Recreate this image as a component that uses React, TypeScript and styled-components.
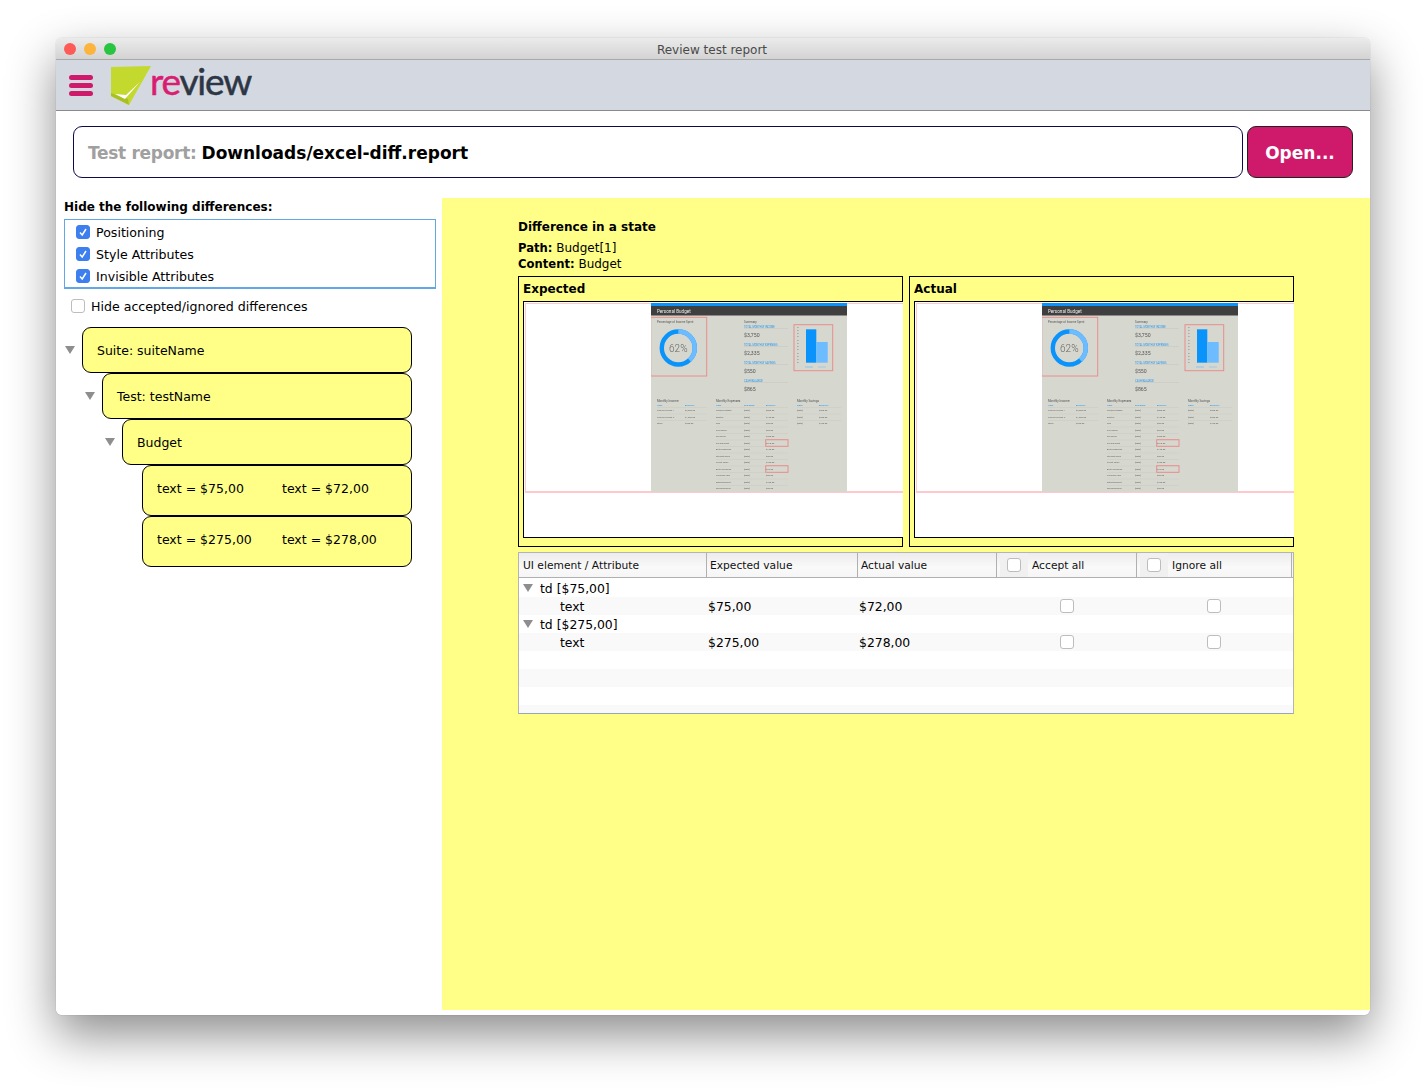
import React from "react";
import styled, { createGlobalStyle } from "styled-components";

const UI_FONT = `"DejaVu Sans", "Noto Sans", sans-serif`;

const GlobalStyle = createGlobalStyle`
  html, body {
    margin: 0;
    padding: 0;
    background: #fff;
    font-family: ${UI_FONT};
    color: #000;
  }
`;

const Page = styled.div`
  box-sizing: border-box;
  width: 1426px;
  height: 1089px;
  padding: 38px 56px 0;
  overflow: hidden;
`;

const Window = styled.div`
  height: 977px;
  display: flex;
  flex-direction: column;
  background: #fff;
  border-radius: 6px;
  overflow: hidden;
`;

const WindowShadow = styled.div`
  border-radius: 6px;
  box-shadow: 0 20px 48px rgba(0, 0, 0, 0.45), 0 0 1px rgba(0, 0, 0, 0.4);
`;

const TitleBar = styled.div`
  position: relative;
  flex: none;
  height: 21px;
  line-height: 24px;
  padding-right: 2px;
  text-align: center;
  font-size: 12px;
  color: #4a4a4a;
  background: linear-gradient(#ebebeb, #d3d3d3);
  border-bottom: 1px solid #a9a9a9;
`;

const Lights = styled.div`
  position: absolute;
  left: 8px;
  top: 5px;
  display: flex;
  gap: 8px;
`;

const Light = styled.span<{ $color: string }>`
  width: 12px;
  height: 12px;
  border-radius: 50%;
  background: ${(p) => p.$color};
`;

const Toolbar = styled.div`
  flex: none;
  height: 50px;
  display: flex;
  align-items: center;
  padding-left: 13px;
  gap: 18px;
  background: #d4d9e1;
  border-bottom: 1px solid #8a8a8a;
`;

const Burger = styled.div`
  display: flex;
  flex-direction: column;
  gap: 3px;
  width: 24px;
  margin-top: 1px;
`;

const BurgerBar = styled.span`
  height: 5px;
  border-radius: 3px;
  background: #cf1a6c;
`;

const Logo = styled.div`
  display: flex;
  align-items: center;
`;

const LogoMark = styled.svg`
  width: 40px;
  height: 40px;
  margin-top: 1px;
`;

const LogoWord = styled.span`
  margin-left: -1px;
  margin-top: -8px;
  font-family: Lato, sans-serif;
  font-size: 37px;
  line-height: 40px;
  letter-spacing: -1.2px;
  color: #2d3645;
  -webkit-text-stroke: 0.5px currentColor;
`;

const LogoAccent = styled.span`
  color: #d81e72;
`;

const ReportBar = styled.div`
  flex: none;
  display: flex;
  gap: 4px;
  padding: 15px 17px 20px;
`;

const ReportField = styled.div`
  flex: 1;
  height: 52px;
  box-sizing: border-box;
  display: flex;
  align-items: center;
  gap: 5px;
  padding: 2px 14px 0;
  border: 1px solid #0b0b4a;
  border-radius: 9px;
  font-size: 17px;
  font-weight: 700;
`;

const ReportLabel = styled.span`
  color: #a0a0a0;
  letter-spacing: -0.3px;
`;

const OpenButton = styled.button`
  width: 106px;
  height: 52px;
  box-sizing: border-box;
  padding: 2px 0 0;
  border: 1px solid #222;
  border-radius: 9px;
  background: #cf1a6c;
  color: #fff;
  font-family: inherit;
  font-size: 17px;
  font-weight: 700;
`;

const Body = styled.div`
  flex: 1;
  min-height: 0;
  display: flex;
  padding-bottom: 5px;
`;

const Sidebar = styled.div`
  flex: none;
  width: 386px;
  box-sizing: border-box;
  padding-left: 8px;
`;

const FilterTitle = styled.div`
  font-size: 12px;
  font-weight: 700;
  line-height: 18px;
  margin-bottom: 3px;
`;

const FilterBox = styled.div`
  box-sizing: border-box;
  width: 372px;
  height: 70px;
  padding: 1px 11px 0;
  display: flex;
  flex-direction: column;
  border: 1px solid #62a8e5;
  border-bottom-width: 2px;
`;

const CheckRow = styled.label`
  flex: none;
  height: 22px;
  display: flex;
  align-items: center;
  gap: 6px;
  font-size: 12.6px;
`;

const HideRow = styled(CheckRow)`
  height: 22px;
  margin: 6px 0 10px 7px;
`;

const Box = styled.span<{ $checked?: boolean }>`
  flex: none;
  box-sizing: border-box;
  width: 14px;
  height: 14px;
  display: inline-flex;
  align-items: center;
  justify-content: center;
  border-radius: 3px;
  background: ${(p) => (p.$checked ? "#3d7fef" : "#fff")};
  border: 1px solid ${(p) => (p.$checked ? "#3d7fef" : "#bdbdbd")};
`;

const Tree = styled.div`
  display: flex;
  flex-direction: column;
  width: 350px;
  margin-left: -2px;
`;

const TreeRow = styled.div<{ $depth: number }>`
  display: flex;
  align-items: center;
  padding-left: ${(p) => p.$depth * 20}px;
`;

const Toggle = styled.span`
  flex: none;
  width: 20px;
  height: 10px;
  display: flex;
  align-items: center;
`;

const Caret = styled.span`
  display: block;
  margin-left: 3px;
  width: 0;
  height: 0;
  border-left: 5px solid transparent;
  border-right: 5px solid transparent;
  border-top: 8px solid #8e8e8e;
`;

// $leaf rows are a little taller and carry their label above the centre
const TreeNode = styled.div<{ $leaf?: boolean }>`
  flex: 1;
  box-sizing: border-box;
  height: ${(p) => (p.$leaf ? 51 : 46)}px;
  display: flex;
  align-items: center;
  padding-left: 14px;
  padding-bottom: ${(p) => (p.$leaf ? 4 : 0)}px;
  background: #ffff88;
  border: 1px solid #000;
  border-radius: 9px;
  font-size: 12.5px;
`;

const DiffValue = styled.span`
  width: 125px;
`;

const DetailPane = styled.div`
  flex: 1;
  box-sizing: border-box;
  padding: 21px 0 0 76px;
  background: #ffff88;
`;

const DetailTitle = styled.div`
  font-size: 12px;
  font-weight: 700;
  line-height: 17px;
  margin-bottom: 4px;
`;

const DetailLine = styled.div`
  font-size: 12px;
  line-height: 16px;
`;

const Strong = styled.b`
  font-size: 11.6px;
  font-weight: 700;
`;

const Compare = styled.div`
  width: 776px;
  display: flex;
  gap: 6px;
  margin-top: 4px;
`;

const ComparePanel = styled.div`
  box-sizing: border-box;
  flex: 1;
  height: 271px;
  border: 1px solid #000;
  border-width: 1px 1px 1.5px;
`;

const CompareTitle = styled.div`
  height: 24px;
  line-height: 24px;
  padding-left: 4px;
  font-size: 12px;
  font-weight: 700;
`;

const Viewport = styled.div`
  box-sizing: border-box;
  height: 237px;
  margin: 0 -1px 0 4px;
  padding: 1px 0 0 1px;
  background: #fff;
  border: 1px solid #000;
  border-right: 0;
`;

const PageBounds = styled.div`
  height: 187px;
  padding-left: 125px;
  border: 2px solid #ffc8cc;
  border-width: 1px 0 2px 1px;
`;

const Shot = styled.svg`
  display: block;
  width: 196px;
  height: 189px;
  margin-top: -1px;
  filter: blur(0.35px);
  font-family: Roboto, sans-serif;
`;

const DiffTable = styled.div`
  box-sizing: border-box;
  width: 776px;
  height: 162px;
  margin-top: 5px;
  overflow: hidden;
  background: #fff;
  border: 1px solid #b4b4b4;
  border-bottom-color: #9aa6b8;
`;

const COLUMNS = "188px 151px 139px 140px 155px";

const HeadRow = styled.div`
  display: grid;
  grid-template-columns: ${COLUMNS};
  height: 25px;
  margin-bottom: 1px;
  background: linear-gradient(#ececec, #f9f9f9 60%, #f6f6f6);
  border-bottom: 1px solid #b0b0b0;
  box-sizing: border-box;
`;

const HeadCell = styled.div`
  display: flex;
  align-items: center;
  box-sizing: border-box;
  padding-left: 3px;
  border-right: 1px solid #b0b0b0;
  font-size: 10.7px;
  color: #111;
`;

const FirstHeadCell = styled(HeadCell)`
  padding-left: 4px;
`;

const HeadBoxWell = styled.span`
  display: flex;
  align-items: center;
  justify-content: center;
  align-self: stretch;
  width: 28px;
  margin-right: 4px;
  background: #f0f0f0;
`;

const BodyRow = styled.div<{ $alt: boolean }>`
  box-sizing: border-box;
  display: grid;
  grid-template-columns: ${COLUMNS};
  height: 18px;
  align-items: center;
  font-size: 12.4px;
  background: ${(p) => (p.$alt ? "#f9f9f9" : "#fff")};
`;

const FirstCell = styled.div`
  display: flex;
  align-items: center;
  padding-left: 41px;
`;

const GroupCell = styled.div`
  display: flex;
  align-items: center;
  padding-left: 1px;
  grid-column: 1 / -1;
`;

const GroupToggle = styled.span`
  width: 20px;
`;

const ValueCell = styled.div`
  padding-left: 1px;
`;

const BoxCell = styled.div`
  display: flex;
  justify-content: center;
`;

const LastBoxCell = styled(BoxCell)`
  padding-right: 1px;
`;

function Tick() {
  return (
    <svg width="10" height="10" viewBox="0 0 10 10" fill="none">
      <path d="M2 5.5 L4.2 8 L8 2" stroke="#fff" strokeWidth="1.5" />
    </svg>
  );
}

const incomeRows = [
  ["Income Source 1", "$2,500.00"],
  ["Income Source 2", "$1,000.00"],
  ["Other", "$250.00"],
];

const expenseRows = [
  ["Rent/mortgage", "$800.00"],
  ["Electric", "$120.00"],
  ["Gas", "$50.00"],
  ["Cell phone", "$60.00"],
  ["Groceries", "$300.00"],
  ["Car payment", "$275.00"],
  ["Auto expenses", "$120.00"],
  ["Student loans", "$50.00"],
  ["Credit cards", "$100.00"],
  ["Auto insurance", "$75.00"],
  ["Personal care", "$50.00"],
  ["Entertainment", "$100.00"],
  ["Miscellaneous", "$50.00"],
];

const savingsRows = ["$300.00", "$200.00", "$100.00"];

const summaryRows = [
  ["TOTAL MONTHLY INCOME", "$3,750"],
  ["TOTAL MONTHLY EXPENSES", "$2,335"],
  ["TOTAL MONTHLY SAVINGS", "$550"],
  ["CASH BALANCE", "$865"],
];

// the captured page inside the Expected / Actual panels
function BudgetShot() {
  const rowY = (i: number) => 107.5 + i * 6.5;
  return (
    <Shot viewBox="0 0 196 189">
      <rect width="196" height="189" fill="#d6d7cf" />
      <rect width="196" height="3" fill="#0a94fb" />
      <rect y="3" width="196" height="9.5" fill="#3f3f3f" />
      <text x="6" y="9.8" fontSize="4.6" fill="#eee">Personal Budget</text>

      <text x="6" y="19.5" fontSize="2.9" fill="#555">Percentage of Income Spent</text>
      <circle cx="27.3" cy="45" r="16.5" fill="none" stroke="#0a94fb" strokeWidth="4.4" />
      <circle
        cx="27.3"
        cy="45"
        r="16.5"
        fill="none"
        stroke="#6cbcff"
        strokeWidth="4.4"
        strokeDasharray="39.4 64.3"
        transform="rotate(-90 27.3 45)"
      />
      <text x="27.3" y="48.6" fontSize="10" fontWeight="300" textAnchor="middle" fill="#666">62%</text>
      <rect x="-0.3" y="14.3" width="56" height="58.7" fill="none" stroke="#e88e8e" />

      <text x="93" y="19.5" fontSize="3" fill="#555">Summary</text>
      {summaryRows.map(([label, value], i) => (
        <g key={label}>
          <text x="93" y={24.5 + i * 18} fontSize="2.6" fill="#1f96f5">{label}</text>
          <line x1="93" x2="137" y1={25.5 + i * 18} y2={25.5 + i * 18} stroke="#c4c5bd" strokeWidth="0.5" />
          <text x="93" y={33.8 + i * 18} fontSize="5.2" fill="#555">{value}</text>
        </g>
      ))}

      <rect x="155" y="26.3" width="10.3" height="33.4" fill="#0a94fb" />
      <rect x="165.3" y="39" width="11.4" height="20.7" fill="#6cbcff" />
      {[0, 1, 2, 3, 4, 5, 6, 7, 8, 9, 10, 11].map((i) => (
        <text key={i} x="146" y={24.5 + i * 3.25} fontSize="1.5" fill="#777">$0</text>
      ))}
      <rect x="154" y="63.5" width="8" height="1" fill="#8cc4ee" />
      <rect x="167" y="63.5" width="8" height="1" fill="#a8c8e0" />
      <rect x="143" y="21.7" width="38.7" height="46" fill="none" stroke="#e88e8e" />

      <text x="6" y="98.5" fontSize="3" fill="#555">Monthly Income</text>
      <text x="65" y="98.5" fontSize="3" fill="#555">Monthly Expenses</text>
      <text x="146" y="98.5" fontSize="3" fill="#555">Monthly Savings</text>
      <g fontSize="2.3" fill="#1f96f5">
        <text x="6" y="102.8">ITEM</text>
        <text x="34" y="102.8">AMOUNT</text>
        <text x="65" y="102.8">ITEM</text>
        <text x="93" y="102.8">DUE DATE</text>
        <text x="115" y="102.8">AMOUNT</text>
        <text x="146" y="102.8">DATE</text>
        <text x="168" y="102.8">AMOUNT</text>
      </g>

      {incomeRows.map(([item, amount], i) => (
        <g key={item} fontSize="2.3" fill="#666">
          <text x="6" y={rowY(i) + 0.8}>{item}</text>
          <text x="34" y={rowY(i) + 0.8}>{amount}</text>
          <line x1="6" x2="56" y1={rowY(i) - 3} y2={rowY(i) - 3} stroke="#c4c5bd" strokeWidth="0.4" />
        </g>
      ))}
      {expenseRows.map(([item, amount], i) => (
        <g key={item} fontSize="2.3" fill="#666">
          <text x="65" y={rowY(i) + 0.8}>{item}</text>
          <text x="93" y={rowY(i) + 0.8}>[Date]</text>
          <text x="115" y={rowY(i) + 0.8}>{amount}</text>
          <line x1="65" x2="137" y1={rowY(i) - 3} y2={rowY(i) - 3} stroke="#c4c5bd" strokeWidth="0.4" />
        </g>
      ))}
      {savingsRows.map((amount, i) => (
        <g key={amount} fontSize="2.3" fill="#666">
          <text x="146" y={rowY(i) + 0.8}>[Date]</text>
          <text x="168" y={rowY(i) + 0.8}>{amount}</text>
          <line x1="146" x2="190" y1={rowY(i) - 3} y2={rowY(i) - 3} stroke="#c4c5bd" strokeWidth="0.4" />
        </g>
      ))}

      <rect x="114.7" y="136.7" width="22.3" height="6.6" fill="none" stroke="#e88e8e" />
      <rect x="114.7" y="162.7" width="22.3" height="6.6" fill="none" stroke="#e88e8e" />
    </Shot>
  );
}

function CapturePanel({ title }: { title: string }) {
  return (
    <ComparePanel>
      <CompareTitle>{title}</CompareTitle>
      <Viewport>
        <PageBounds>
          <BudgetShot />
        </PageBounds>
      </Viewport>
    </ComparePanel>
  );
}

const tableRows = [
  { group: "td [$75,00]", expected: "$75,00", actual: "$72,00" },
  { group: "td [$275,00]", expected: "$275,00", actual: "$278,00" },
];

export default function App() {
  return (
    <>
      <GlobalStyle />
      <Page>
        <WindowShadow>
          <Window>
            <TitleBar>
              <Lights>
                <Light $color="#fc5b57" />
                <Light $color="#fdb43c" />
                <Light $color="#29c440" />
              </Lights>
              Review test report
            </TitleBar>
            <Toolbar>
              <Burger>
                <BurgerBar />
                <BurgerBar />
                <BurgerBar />
              </Burger>
              <Logo>
                <LogoMark viewBox="0 0 40 40">
                  <polygon points="0,1 40,0 18,39 0,30" fill="#c3d92e" />
                  <polygon points="18,39 0,30 0,27 17,33" fill="#a9c022" />
                  <path d="M4 28 L14 33 L29 16 L15 29 Z" fill="#fff" />
                </LogoMark>
                <LogoWord>
                  <LogoAccent>re</LogoAccent>view
                </LogoWord>
              </Logo>
            </Toolbar>
            <ReportBar>
              <ReportField>
                <ReportLabel>Test report:</ReportLabel>
                <span>Downloads/excel-diff.report</span>
              </ReportField>
              <OpenButton>Open...</OpenButton>
            </ReportBar>
            <Body>
              <Sidebar>
                <FilterTitle>Hide the following differences:</FilterTitle>
                <FilterBox>
                  {["Positioning", "Style Attributes", "Invisible Attributes"].map((label) => (
                    <CheckRow key={label}>
                      <Box $checked>
                        <Tick />
                      </Box>
                      {label}
                    </CheckRow>
                  ))}
                </FilterBox>
                <HideRow>
                  <Box />
                  Hide accepted/ignored differences
                </HideRow>
                <Tree>
                  <TreeRow $depth={0}>
                    <Toggle>
                      <Caret />
                    </Toggle>
                    <TreeNode>Suite: suiteName</TreeNode>
                  </TreeRow>
                  <TreeRow $depth={1}>
                    <Toggle>
                      <Caret />
                    </Toggle>
                    <TreeNode>Test: testName</TreeNode>
                  </TreeRow>
                  <TreeRow $depth={2}>
                    <Toggle>
                      <Caret />
                    </Toggle>
                    <TreeNode>Budget</TreeNode>
                  </TreeRow>
                  <TreeRow $depth={3}>
                    <Toggle />
                    <TreeNode $leaf>
                      <DiffValue>text = $75,00</DiffValue>
                      <DiffValue>text = $72,00</DiffValue>
                    </TreeNode>
                  </TreeRow>
                  <TreeRow $depth={3}>
                    <Toggle />
                    <TreeNode $leaf>
                      <DiffValue>text = $275,00</DiffValue>
                      <DiffValue>text = $278,00</DiffValue>
                    </TreeNode>
                  </TreeRow>
                </Tree>
              </Sidebar>
              <DetailPane>
                <DetailTitle>Difference in a state</DetailTitle>
                <DetailLine>
                  <Strong>Path:</Strong> Budget[1]
                </DetailLine>
                <DetailLine>
                  <Strong>Content:</Strong> Budget
                </DetailLine>
                <Compare>
                  <CapturePanel title="Expected" />
                  <CapturePanel title="Actual" />
                </Compare>
                <DiffTable>
                  <HeadRow>
                    <FirstHeadCell>UI element / Attribute</FirstHeadCell>
                    <HeadCell>Expected value</HeadCell>
                    <HeadCell>Actual value</HeadCell>
                    <HeadCell>
                      <HeadBoxWell>
                        <Box />
                      </HeadBoxWell>
                      Accept all
                    </HeadCell>
                    <HeadCell>
                      <HeadBoxWell>
                        <Box />
                      </HeadBoxWell>
                      Ignore all
                    </HeadCell>
                  </HeadRow>
                  {tableRows.map((row) => (
                    <React.Fragment key={row.group}>
                      <BodyRow $alt={false}>
                        <GroupCell>
                          <GroupToggle>
                            <Caret />
                          </GroupToggle>
                          {row.group}
                        </GroupCell>
                      </BodyRow>
                      <BodyRow $alt>
                        <FirstCell>text</FirstCell>
                        <ValueCell>{row.expected}</ValueCell>
                        <ValueCell>{row.actual}</ValueCell>
                        <BoxCell>
                          <Box />
                        </BoxCell>
                        <LastBoxCell>
                          <Box />
                        </LastBoxCell>
                      </BodyRow>
                    </React.Fragment>
                  ))}
                  <BodyRow $alt={false} />
                  <BodyRow $alt />
                  <BodyRow $alt={false} />
                  <BodyRow $alt />
                </DiffTable>
              </DetailPane>
            </Body>
          </Window>
        </WindowShadow>
      </Page>
    </>
  );
}
